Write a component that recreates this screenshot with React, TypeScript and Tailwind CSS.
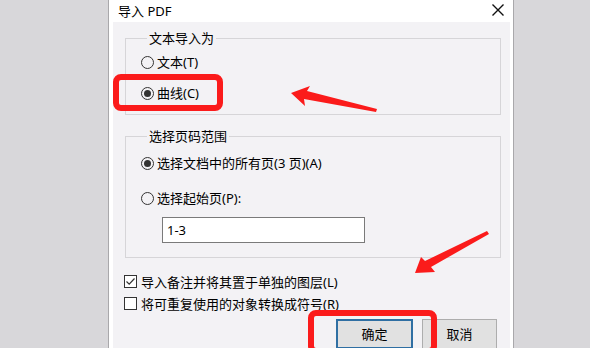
import React from 'react';

const Radio: React.FC<{ checked?: boolean }> = ({ checked }) => (
    <span className="w-[13px] h-[13px] rounded-full border border-[#333] flex items-center justify-center shrink-0">
        {checked && <span className="w-[7px] h-[7px] rounded-full bg-[#333]" />}
    </span>
);

const Checkbox: React.FC<{ checked?: boolean }> = ({ checked }) => (
    <span className="w-[13px] h-[13px] border border-[#333] bg-white flex items-center justify-center shrink-0">
        {checked && (
            <svg width="11" height="11" viewBox="0 0 11 11">
                <path d="M1.5 5.5 L4.2 8.2 L9.5 2.5" fill="none" stroke="#333" strokeWidth={1.2} />
            </svg>
        )}
    </span>
);

const App: React.FC = () => {
    return (
        <div className="relative w-[590px] h-[348px] overflow-hidden flex bg-[#d8d7da] text-[13px] leading-[16px] text-black font-['Noto_Sans','Noto_Sans_CJK_SC',sans-serif]">
            {/* left backdrop */}
            <div className="w-[109px] border-r border-[#a9a8ab]" />

            {/* dialog */}
            <div className="w-[404px] bg-white flex flex-col">
                {/* title bar */}
                <div className="h-[22px] flex items-center justify-between pl-[9px] pr-[9px] shrink-0">
                    <span>导入 PDF</span>
                    <svg width="12" height="12" viewBox="0 0 12 12" className="mb-[3px]">
                        <path d="M0.5 0.5 L11.5 11.5 M11.5 0.5 L0.5 11.5" stroke="#111" strokeWidth={1.4} />
                    </svg>
                </div>

                {/* body */}
                <div className="flex-1 ml-[4px] mr-[3px] bg-[#f3f2f5] pl-[12px] pr-[9px] pt-[8px] flex flex-col">
                    <fieldset className="h-[85px] border border-[#d6d5d8] pl-[15px]">
                        <legend className="ml-[6px] px-[2px]">文本导入为</legend>
                        <div className="flex items-center gap-[3px] h-[20px] mt-[6px]">
                            <Radio />
                            <span>文本(T)</span>
                        </div>
                        <div className="flex items-center gap-[3px] h-[20px] mt-[11px]">
                            <Radio checked />
                            <span>曲线(C)</span>
                        </div>
                    </fieldset>

                    <fieldset className="h-[130px] mt-[13px] border border-[#d6d5d8] pl-[15px]">
                        <legend className="ml-[6px] px-[2px]">选择页码范围</legend>
                        <div className="flex items-center gap-[3px] h-[20px] mt-[9px]">
                            <Radio checked />
                            <span>选择文档中的所有页(3 页)(A)</span>
                        </div>
                        <div className="flex items-center gap-[3px] h-[20px] mt-[15px]">
                            <Radio />
                            <span>选择起始页(P):</span>
                        </div>
                        <div className="ml-[21px] mt-[9px] w-[203px] h-[26px] bg-white border border-[#7a7a7a] flex items-center pl-[4px]">
                            1-3
                        </div>
                    </fieldset>

                    <div className="mt-[17px] -ml-[1px] flex flex-col gap-[9px]">
                        <div className="flex items-center gap-[4px] h-[13px]">
                            <Checkbox checked />
                            <span>导入备注并将其置于单独的图层(L)</span>
                        </div>
                        <div className="flex items-center gap-[4px] h-[13px]">
                            <Checkbox />
                            <span>将可重复使用的对象转换成符号(R)</span>
                        </div>
                    </div>

                    <div className="mt-[9px] flex justify-end gap-[9px] pr-[4px]">
                        <button className="w-[77px] h-[30px] bg-[#e1e1e1] border-2 border-[#2f6fa3] flex items-center justify-center">
                            确定
                        </button>
                        <button className="w-[75px] h-[30px] bg-[#e1e1e1] border border-[#adadad] flex items-center justify-center">
                            取消
                        </button>
                    </div>
                </div>
            </div>

            {/* right backdrop */}
            <div className="flex-1 border-l border-[#a9a8ab]" />

            {/* annotations */}
            <div className="absolute left-[113px] top-[74px] w-[110px] h-[37px] border-[6px] border-[#fb1b1b] rounded-[8px]" />
            <div className="absolute left-[308px] top-[310px] w-[129px] h-[44px] border-[6px] border-[#fb1b1b] rounded-[8px]" />
            <svg className="absolute inset-0 pointer-events-none" width="590" height="348" viewBox="0 0 590 348">
                <polygon
                    points="291,93 310,86 307,91 377,109 376,112 304,99 305,106"
                    fill="#fb1b1b"
                />
                <polygon
                    points="415,273 421,257 425,261 487,231 489,234 431,267 435,272"
                    fill="#fb1b1b"
                />
            </svg>
        </div>
    );
};

export default App;
